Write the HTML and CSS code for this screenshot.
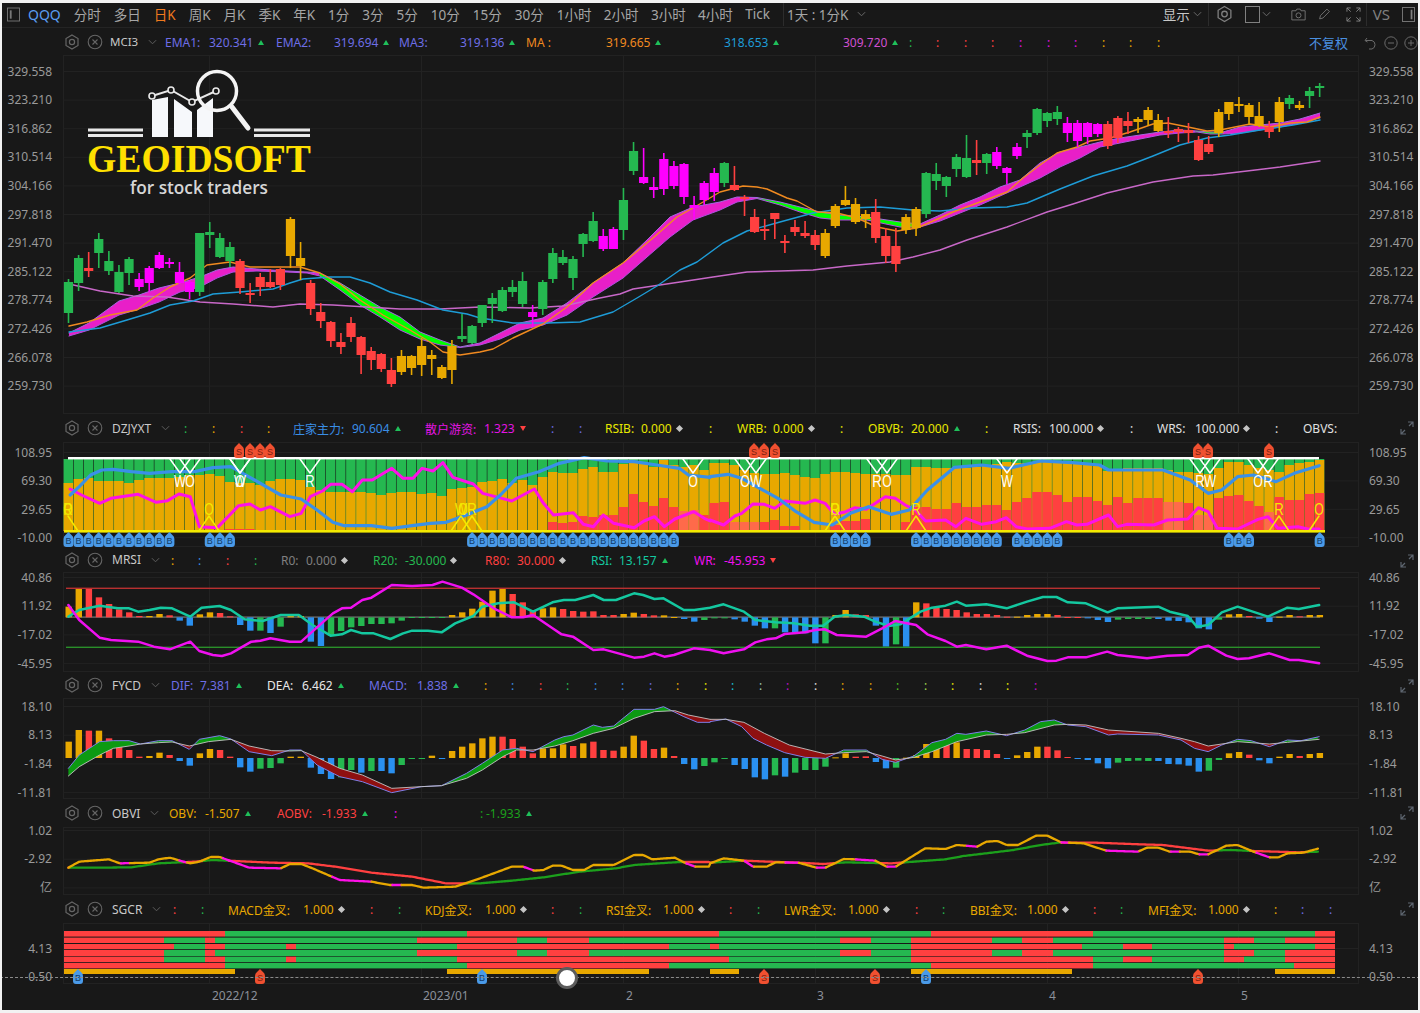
FILE: index.html
```html
<!DOCTYPE html>
<html lang="zh">

<head>
    <meta charset="UTF-8">
    <title>QQQ</title>
    <link rel="stylesheet" href="styles.css">
</head>

<body>
    <svg class="defs" width="0" height="0">
        <symbol id="i-gear" viewBox="0 0 16 16">
            <path d="M8 1 14 4.5V11.5L8 15 2 11.5V4.5Z" fill="none" stroke="currentColor" stroke-width="1.2" />
            <circle cx="8" cy="8" r="2.6" fill="none" stroke="currentColor" stroke-width="1.2" />
        </symbol>
        <symbol id="i-close" viewBox="0 0 16 16">
            <circle cx="8" cy="8" r="6.8" fill="none" stroke="currentColor" stroke-width="1.1" />
            <path d="M5.5 5.5 10.5 10.5M10.5 5.5 5.5 10.5" stroke="currentColor" stroke-width="1.1" />
        </symbol>
        <symbol id="i-chev" viewBox="0 0 10 6">
            <path d="M1 1 5 5 9 1" fill="none" stroke="currentColor" stroke-width="1.1" />
        </symbol>
        <symbol id="i-expand" viewBox="0 0 14 14">
            <path d="M8 1H13V6M13 1 9 5M6 13H1V8M1 13 5 9" fill="none" stroke="currentColor" stroke-width="1.2" />
        </symbol>
    </svg>

    <div class="app">
        <div class="topbar">
            <svg class="tb-box" viewBox="0 0 14 15"><rect x="0.5" y="0.5" width="13" height="14" fill="none" stroke="currentColor" /><rect x="3" y="3" width="2" height="9" fill="currentColor" /></svg>
            <span class="tb-symbol">QQQ</span>
            <span>分时</span>
            <span>多日</span>
            <span class="tb-active">日K</span>
            <span>周K</span>
            <span>月K</span>
            <span>季K</span>
            <span>年K</span>
            <span>1分</span>
            <span>3分</span>
            <span>5分</span>
            <span>10分</span>
            <span>15分</span>
            <span>30分</span>
            <span class="tb-hour">1小时</span>
            <span class="tb-hour">2小时</span>
            <span class="tb-hour">3小时</span>
            <span class="tb-hour">4小时</span>
            <span>Tick</span>
            <i class="tb-sep"></i>
            <span class="tb-range">1天 : 1分K</span>
            <svg class="chev"><use href="#i-chev" /></svg>
            <div class="tb-right">
                <span class="tb-show">显示</span>
                <svg class="chev"><use href="#i-chev" /></svg>
                <i class="tb-sep"></i>
                <svg class="tb-gear"><use href="#i-gear" /></svg>
                <svg class="tb-square" viewBox="0 0 15 17"><rect x="0.5" y="0.5" width="14" height="16" fill="none" stroke="currentColor" /></svg>
                <svg class="chev"><use href="#i-chev" /></svg>
                <svg class="tb-camera" viewBox="0 0 18 16"><path d="M1 3.5H6L7 1.5H11L12 3.5H17V14.5H1Z" fill="none" stroke="currentColor" /><circle cx="9" cy="9" r="3" fill="none" stroke="currentColor" /></svg>
                <svg class="tb-pencil" viewBox="0 0 16 16"><path d="M2 14 3 10 11 2 14 5 6 13Z" fill="none" stroke="currentColor" /></svg>
                <svg class="tb-full" viewBox="0 0 16 16"><path d="M1 5V1H5M11 1H15V5M15 11V15H11M5 15H1V11M1 1 5 5M15 1 11 5M15 15 11 11M1 15 5 11" fill="none" stroke="currentColor" /></svg>
                <i class="tb-sep"></i>
                <span class="tb-vs">VS</span>
                <svg class="tb-panel" viewBox="0 0 15 17"><rect x="0.5" y="0.5" width="14" height="16" fill="none" stroke="currentColor" /><rect x="10" y="3" width="2" height="11" fill="currentColor" /></svg>
            </div>
        </div>

        <section class="pane pane-main" id="main">
            <div class="pane-head">
                <svg class="gear"><use href="#i-gear" /></svg>
                <svg class="close"><use href="#i-close" /></svg>
                <span class="name name-mci">MCI3</span>
                <svg class="chev"><use href="#i-chev" /></svg>
                <div class="legend"></div>
                <div class="head-tools">
                    <span class="no-adjust">不复权</span>
                    <svg class="tool" viewBox="0 0 14 14"><path d="M3 2 1 4.5 3.5 6M1.5 4.5H8A4.5 4.5 0 0 1 8 13H5" fill="none" stroke="currentColor" /></svg>
                    <svg class="tool" viewBox="0 0 14 14"><circle cx="7" cy="7" r="6.2" fill="none" stroke="currentColor" /><path d="M4 7H10" stroke="currentColor" /></svg>
                    <svg class="tool" viewBox="0 0 14 14"><circle cx="7" cy="7" r="6.2" fill="none" stroke="currentColor" /><path d="M4 7H10M7 4V10" stroke="currentColor" /></svg>
                </div>
            </div>
            <div class="pane-body">
                <div class="axis axis-left"></div>
                <svg class="plot"></svg>
                <div class="axis axis-right"></div>
            </div>
            <svg class="logo" viewBox="0 0 224 128">
                <path d="M64 30 80 27V67H64ZM86 29 104 42V67H86ZM109 40 125 28V67H109Z" fill="#f6f8fb" />
                <path d="M64 26 83 20 104 32 128 21" fill="none" stroke="#e8e8e8" stroke-width="2" />
                <circle cx="64" cy="26" r="3" fill="#181818" stroke="#e8e8e8" stroke-width="1.6" />
                <circle cx="83" cy="20" r="3" fill="#181818" stroke="#e8e8e8" stroke-width="1.6" />
                <circle cx="104" cy="32" r="3" fill="#181818" stroke="#e8e8e8" stroke-width="1.6" />
                <circle cx="128" cy="21" r="3" fill="#181818" stroke="#e8e8e8" stroke-width="1.6" />
                <circle cx="129" cy="21" r="19.5" fill="none" stroke="#f4f4f4" stroke-width="3.5" />
                <path d="M144 37 160 58" stroke="#f4f4f4" stroke-width="5" stroke-linecap="round" />
                <path d="M0 60H55M0 65.5H55M166 60H222M166 65.5H222" stroke="#e8e8e8" stroke-width="3" />
                <text class="logo-title" x="-1" y="102" textLength="224" lengthAdjust="spacingAndGlyphs">GEOIDSOFT</text>
                <text class="logo-sub" x="42" y="124" textLength="138" lengthAdjust="spacingAndGlyphs">for stock traders</text>
            </svg>
        </section>

        <section class="pane pane-dz" id="dz">
            <div class="pane-head">
                <svg class="gear"><use href="#i-gear" /></svg>
                <svg class="close"><use href="#i-close" /></svg>
                <span class="name">DZJYXT</span>
                <svg class="chev"><use href="#i-chev" /></svg>
                <div class="legend"></div>
                <svg class="expand"><use href="#i-expand" /></svg>
            </div>
            <div class="pane-body">
                <div class="axis axis-left"></div>
                <svg class="plot"></svg>
                <div class="axis axis-right"></div>
            </div>
        </section>

        <section class="pane pane-mrsi" id="mrsi">
            <div class="pane-head">
                <svg class="gear"><use href="#i-gear" /></svg>
                <svg class="close"><use href="#i-close" /></svg>
                <span class="name">MRSI</span>
                <svg class="chev"><use href="#i-chev" /></svg>
                <div class="legend"></div>
                <svg class="expand"><use href="#i-expand" /></svg>
            </div>
            <div class="pane-body">
                <div class="axis axis-left"></div>
                <svg class="plot"></svg>
                <div class="axis axis-right"></div>
            </div>
        </section>

        <section class="pane pane-fycd" id="fycd">
            <div class="pane-head">
                <svg class="gear"><use href="#i-gear" /></svg>
                <svg class="close"><use href="#i-close" /></svg>
                <span class="name">FYCD</span>
                <svg class="chev"><use href="#i-chev" /></svg>
                <div class="legend"></div>
                <svg class="expand"><use href="#i-expand" /></svg>
            </div>
            <div class="pane-body">
                <div class="axis axis-left"></div>
                <svg class="plot"></svg>
                <div class="axis axis-right"></div>
            </div>
        </section>

        <section class="pane pane-obvi" id="obvi">
            <div class="pane-head">
                <svg class="gear"><use href="#i-gear" /></svg>
                <svg class="close"><use href="#i-close" /></svg>
                <span class="name">OBVI</span>
                <svg class="chev"><use href="#i-chev" /></svg>
                <div class="legend"></div>
                <svg class="expand"><use href="#i-expand" /></svg>
            </div>
            <div class="pane-body">
                <div class="axis axis-left"></div>
                <svg class="plot"></svg>
                <div class="axis axis-right"></div>
            </div>
        </section>

        <section class="pane pane-sgcr" id="sgcr">
            <div class="pane-head">
                <svg class="gear"><use href="#i-gear" /></svg>
                <svg class="close"><use href="#i-close" /></svg>
                <span class="name">SGCR</span>
                <svg class="chev"><use href="#i-chev" /></svg>
                <div class="legend"></div>
                <svg class="expand"><use href="#i-expand" /></svg>
            </div>
            <div class="pane-body">
                <div class="axis axis-left"></div>
                <svg class="plot"></svg>
                <div class="axis axis-right"></div>
            </div>
        </section>

        <div class="time-axis">
            <span>2022/12</span>
            <span>2023/01</span>
            <span>2</span>
            <span>3</span>
            <span>4</span>
            <span>5</span>
        </div>

        <div class="crosshair"></div>
        <div class="knob"></div>
    </div>

    <script src="app.js"></script>
</body>

</html>
```

FILE: styles.css
```css
* {
    box-sizing: border-box;
}

body {
    margin: 0;
    height: 1013px;
    overflow: hidden;
    background: #f2f2f2;
    font-family: "Noto Sans", "Noto Sans CJK SC", sans-serif;
    font-size: 12px;
    color: #9a9a9a;
}

.defs {
    position: absolute;
}

.app {
    position: relative;
    margin: 3px 2px 0;
    height: 1007px;
    background: #181818;
    display: flex;
    flex-direction: column;
    overflow: hidden;
}

/* top bar */
.topbar {
    height: 25px;
    flex: none;
    display: flex;
    align-items: center;
    gap: 13px;
    padding: 0 0 2px 5px;
    border-bottom: 1px solid #242424;
    font-size: 13.5px;
    color: #a6a6a6;
    white-space: nowrap;
}

.tb-box {
    width: 13px;
    height: 15px;
    margin-right: -5px;
    color: #777;
}

.tb-symbol {
    font-size: 14px;
    color: #5a9df0;
}

.tb-active {
    color: #f07a1e;
}

.tb-hour {
    margin-right: -0.6px;
}

.tb-sep {
    width: 1px;
    height: 24px;
    flex: none;
    background: #2c2c2c;
}

.tb-range {
    margin-left: -10px;
    margin-right: -4px;
}

.chev {
    width: 9px;
    height: 6px;
    flex: none;
    color: #6a6a6a;
}

.tb-right {
    margin-left: auto;
    display: flex;
    align-items: center;
    padding-right: 3px;
}

.tb-show {
    color: #c8c8c8;
}

.tb-right > .chev {
    margin: 0 6px 0 3px;
}

.tb-gear {
    width: 17px;
    height: 18px;
    margin: 0 12px 0 7px;
    color: #808080;
}

.tb-square {
    width: 15px;
    height: 17px;
    color: #808080;
}

.tb-square + .chev {
    margin: 0 20px 0 2px;
}

.tb-camera {
    width: 15px;
    height: 15px;
    margin-right: 12px;
    color: #808080;
}

.tb-pencil {
    width: 13px;
    height: 14px;
    margin-right: 14px;
    color: #808080;
}

.tb-full {
    width: 17px;
    height: 15px;
    margin-right: 4px;
    color: #808080;
}

.tb-vs {
    margin: 0 12px 0 6px;
    font-size: 15px;
    color: #808080;
}

.tb-panel {
    width: 13px;
    height: 17px;
    color: #808080;
}

/* panes */
.pane {
    position: relative;
    flex: none;
}

.pane-head {
    display: flex;
    align-items: center;
    padding-left: 62px;
    white-space: nowrap;
}

.pane-body {
    display: grid;
    grid-template-columns: 61px 1295px 60px;
    grid-template-rows: minmax(0, 1fr);
}

.pane-main .pane-head { height: 27px; }
.pane-main .pane-body { height: 359px; }
.pane-dz .pane-head { height: 28px; }
.pane-dz .pane-body { height: 105px; }
.pane-mrsi .pane-head { height: 25px; }
.pane-mrsi .pane-body { height: 100px; }
.pane-fycd .pane-head { height: 26px; }
.pane-fycd .pane-body { height: 101px; }
.pane-obvi .pane-head { height: 28px; }
.pane-obvi .pane-body { height: 68px; }
.pane-sgcr .pane-head { height: 28px; }
.pane-sgcr .pane-body { height: 61px; }

.gear,
.close {
    width: 16px;
    height: 16px;
    flex: none;
    color: #666;
}

.close {
    margin-left: 7px;
}

.name {
    margin-left: 9px;
    color: #c9c9c9;
}

.name-mci {
    margin-left: 7px;
    font-size: 11.5px;
}

.pane-head .chev {
    margin-left: 10px;
    color: #5e5e5e;
}

.legend {
    display: flex;
    flex: none;
    align-items: center;
    padding-top: 1px;
}

.lg {
    display: flex;
    flex: none;
    align-items: center;
    overflow: hidden;
}

.lg-label {
    flex: none;
}

.mark {
    flex: none;
    margin-left: 5px;
}

.mark-up {
    width: 0;
    height: 0;
    border: 3px solid transparent;
    border-top: 0;
    border-bottom: 5px solid #1fc05a;
}

.mark-down {
    width: 0;
    height: 0;
    border: 3px solid transparent;
    border-bottom: 0;
    border-top: 5px solid #ff4040;
}

.mark-flat {
    width: 5px;
    height: 5px;
    background: #c4c4c4;
    transform: rotate(45deg);
}

.head-tools {
    position: absolute;
    top: 5px;
    right: 0;
    display: flex;
    align-items: center;
    gap: 6px;
}

.no-adjust {
    margin-right: 10px;
    font-size: 13px;
    color: #4a8fe0;
}

.tool {
    width: 14px;
    height: 14px;
    color: #6a6a6a;
}

.expand {
    position: absolute;
    top: 7px;
    right: 4px;
    width: 14px;
    height: 14px;
    color: #5e6670;
}

/* price scales */
.axis {
    display: flex;
    flex-direction: column;
    min-height: 0;
    font-size: 12px;
    color: #9a9a9a;
}

.axis-left {
    align-items: flex-end;
    padding-right: 11px;
}

.axis-right {
    padding-left: 11px;
}

.plot {
    display: block;
    width: 1295px;
    height: 100%;
    overflow: visible;
}

.plot text {
    font-family: "Liberation Sans", sans-serif;
}

.flag {
    font-size: 16px;
    text-anchor: middle;
}

.tag {
    font-size: 9px;
    text-anchor: middle;
}

/* logo lies over the chart */
.logo {
    position: absolute;
    left: 86px;
    top: 42px;
    width: 224px;
    height: 128px;
    overflow: visible;
}

.logo-title {
    font-family: "Liberation Serif", serif;
    font-weight: bold;
    font-size: 40px;
    fill: #ffe000;
}

.logo-sub {
    font-family: "Open Sans", sans-serif;
    font-weight: 600;
    font-size: 18px;
    fill: #d6d6d6;
}

.time-axis {
    flex: 1;
    display: grid;
    grid-template-columns: 211px 203px 191px 232px 192px auto;
    padding: 3px 0 0 210px;
    color: #8b909a;
}

.crosshair {
    position: absolute;
    top: 974px;
    left: -2px;
    right: -2px;
    border-top: 1.5px dashed #8a8a8a;
}

.knob {
    position: absolute;
    top: 964px;
    left: 554px;
    width: 22px;
    height: 22px;
    border-radius: 50%;
    background: #fff;
    border: 3.5px solid #5c5c5c;
}
```

FILE: app.js
```js
const COL = { g: '#25b850', r: '#ff4040', o: '#e8a800', m: '#ff00ff', b: '#2a90f0', L: '#ff6a4a' };
const VIOLET = '#6e6ee6', GRID = '#222222';
const barX = i => 68.5 + i * 10.09;

// grid positions shared by every pane
const GRID_X = [63, 209, 421, 623, 815, 1047, 1238, 1358];

const panes = {
    main: { first: 71, step: 28.6, ticks: ['329.558', '323.210', '316.862', '310.514', '304.166', '297.818', '291.470', '285.122', '278.774', '272.426', '266.078', '259.730'] },
    dz: { first: 452, step: 28.4, ticks: ['108.95', '69.30', '29.65', '-10.00'] },
    mrsi: { first: 577, step: 28.7, ticks: ['40.86', '11.92', '-17.02', '-45.95'] },
    fycd: { first: 706, step: 28.7, ticks: ['18.10', '8.13', '-1.84', '-11.81'] },
    obvi: { first: 830, step: 28.7, ticks: ['1.02', '-2.92', '亿'] },
    sgcr: { first: 948, step: 28.7, ticks: ['4.13', '0.50'] }
};

// legend rows: [x, label, valueX, value, mark, colour], or [x, ':', colour] for the empty slots
const legends = {
    main: [
        [165, 'EMA1:', 209, '320.341', 'up', VIOLET], [276, 'EMA2:', 334, '319.694', 'up', VIOLET],
        [399, 'MA3:', 460, '319.136', 'up', VIOLET], [526, 'MA :', 606, '319.665', 'up', '#f08a20'],
        [724, '', 724, '318.653', 'up', '#1e9cd7'], [843, '', 843, '309.720', 'up', '#d050d0'],
        [909, ':', '#25b850'], [936, ':', '#ff4040'], [964, ':', '#ff4040'], [991, ':', '#ff4040'], [1019, ':', '#e010e0'],
        [1047, ':', '#e010e0'], [1074, ':', '#e010e0'], [1102, ':', '#e8a800'], [1129, ':', '#e8a800'], [1157, ':', '#e8a800']
    ],
    dz: [
        [184, ':', '#25b850'], [212, ':', '#e8a800'], [240, ':', '#ff4040'], [267, ':', '#e8a800'],
        [293, '庄家主力:', 352, '90.604', 'up', '#3a8ee6'], [425, '散户游资:', 484, '1.323', 'down', '#e414e4'],
        [551, ':', '#6e6ee6'], [579, ':', '#6e6ee6'],
        [605, 'RSIB:', 641, '0.000', 'flat', '#e8e800'], [709, ':', '#e8e800'],
        [737, 'WRB:', 773, '0.000', 'flat', '#e8e800'], [840, ':', '#e8e800'],
        [868, 'OBVB:', 911, '20.000', 'up', '#e8e800'], [985, ':', '#e8e800'],
        [1013, 'RSIS:', 1049, '100.000', 'flat', '#e0e0e0'], [1130, ':', '#e0e0e0'],
        [1157, 'WRS:', 1195, '100.000', 'flat', '#e0e0e0'], [1275, ':', '#e0e0e0'],
        [1303, 'OBVS:', 1345, '', '', '#e0e0e0']
    ],
    mrsi: [
        [171, ':', '#e8a800'], [198, ':', '#3a8ee6'], [226, ':', '#ff4040'], [254, ':', '#25b850'],
        [281, 'R0:', 306, '0.000', 'flat', '#808080'], [373, 'R20:', 405, '-30.000', 'flat', '#25b850'],
        [485, 'R80:', 517, '30.000', 'flat', '#ff4040'], [591, 'RSI:', 619, '13.157', 'up', '#14c8a0'],
        [694, 'WR:', 724, '-45.953', 'down', '#f010f0']
    ],
    fycd: [
        [171, 'DIF:', 200, '7.381', 'up', VIOLET], [267, 'DEA:', 302, '6.462', 'up', '#e8e8e8'],
        [369, 'MACD:', 417, '1.838', 'up', VIOLET],
        [484, ':', '#e8a800'], [511, ':', '#3a8ee6'], [539, ':', '#ff4040'], [566, ':', '#25b850'], [594, ':', '#3a8ee6'],
        [621, ':', '#3a8ee6'], [649, ':', '#6e6ee6'], [676, ':', '#e8a800'], [704, ':', '#e8e800'], [731, ':', '#18c0d8'],
        [759, ':', '#a0c8b0'], [786, ':', '#c010d0'], [814, ':', '#e0e0e0'], [841, ':', '#e8a800'], [869, ':', '#e8a800'],
        [896, ':', '#50c020'], [924, ':', '#a0d850'], [951, ':', '#e8e800'], [979, ':', '#e0e0e0'], [1006, ':', '#e8e800'],
        [1034, ':', '#c010d0']
    ],
    obvi: [
        [169, 'OBV:', 205, '-1.507', 'up', '#e8a800'], [277, 'AOBV:', 322, '-1.933', 'up', '#ff4040'],
        [394, ':', '#f010f0'], [480, ': ', 486, '-1.933', 'up', '#1ca01c']
    ],
    sgcr: [
        [173, ':', '#ff4040'], [201, ':', '#25b850'], [228, 'MACD金叉:', 303, '1.000', 'flat', '#e8a800'],
        [370, ':', '#ff4040'], [398, ':', '#25b850'], [425, 'KDJ金叉:', 485, '1.000', 'flat', '#e8a800'],
        [551, ':', '#ff4040'], [579, ':', '#25b850'], [606, 'RSI金叉:', 663, '1.000', 'flat', '#e8a800'],
        [729, ':', '#ff4040'], [757, ':', '#25b850'], [784, 'LWR金叉:', 848, '1.000', 'flat', '#e8a800'],
        [915, ':', '#ff4040'], [942, ':', '#25b850'], [970, 'BBI金叉:', 1027, '1.000', 'flat', '#e8a800'],
        [1093, ':', '#ff4040'], [1120, ':', '#25b850'], [1148, 'MFI金叉:', 1208, '1.000', 'flat', '#e8a800'],
        [1274, ':', '#e8a800'], [1301, ':', '#6e6ee6'], [1329, ':', '#6e6ee6']
    ]
};

// top bot hi lo colour, one row per trading day, in page pixels
const candles = `282 313 279 323 g|258 283 255 291 g|268 271 252 277 r|239 253 233 268 g|261 271 251 275 g|272 292 265 293 g|259 273 257 285 g|279 287 273 291 m|268 283 266 292 m|255 268 252 269 m
262 264 258 268 m|272 283 262 284 m|282 292 280 299 m|233 292 233 296 g|232 235 222 248 g|238 257 233 258 g|247 261 242 267 g|261 288 259 294 r|293 295 283 303 r|277 287 273 296 r
282 287 269 288 r|269 285 268 290 r|219 256 217 268 o|258 266 242 280 o|283 309 280 315 r|312 321 303 328 r|322 341 321 347 r|342 347 333 354 r|323 337 317 342 r|337 355 336 374 r
351 360 347 370 r|354 369 353 372 r|370 384 358 387 r|356 372 350 375 o|356 368 355 375 o|346 365 338 376 o|355 359 350 375 o|367 378 365 379 o|346 370 340 384 o|336 339 314 342 g
326 343 325 344 g|305 323 305 327 g|298 304 293 323 g|290 311 287 312 g|287 292 280 297 g|281 304 272 307 g|312 317 305 327 m|282 309 280 315 g|253 279 248 283 g|257 263 250 265 g
259 278 256 290 g|234 244 233 257 g|221 241 212 242 g|236 249 229 251 m|229 249 227 249 m|200 230 188 240 g|151 171 142 175 g|177 183 148 184 m|187 190 177 198 m|159 189 153 195 m
166 186 161 189 m|164 197 163 204 m|205 208 196 220 m|183 200 181 205 m|173 192 168 201 m|163 183 162 187 g|185 190 166 191 r|197 199 195 216 r|217 232 209 233 r|229 231 219 240 r
213 219 213 239 r|241 243 235 253 r|227 232 220 236 r|233 236 221 238 r|235 245 230 250 r|233 256 229 258 o|206 226 204 228 o|200 205 186 206 o|204 222 198 224 o|214 219 210 228 o
212 238 199 243 r|236 256 228 263 r|246 264 228 272 r|217 230 214 234 o|209 228 207 236 o|173 214 172 218 g|174 181 163 190 g|177 186 176 197 g|157 169 154 177 g|158 177 135 178 g
160 163 140 175 r|154 163 153 174 g|152 166 147 169 m|168 173 167 184 m|147 156 143 159 m|133 137 130 148 g|109 133 108 135 g|113 121 112 127 g|112 119 106 125 g|123 133 117 142 m
123 141 120 147 m|123 137 122 144 m|124 134 123 137 m|124 146 121 149 r|118 138 116 143 r|121 126 112 134 r|119 122 117 133 o|110 120 107 126 o|120 131 114 132 o|131 133 117 138 r
129 132 127 142 r|130 133 123 143 r|140 160 136 161 r|144 152 136 154 r|112 133 109 137 o|102 114 102 120 o|104 106 97 112 o|105 117 103 125 o|116 126 102 127 o|127 132 121 138 r
102 122 97 132 o|98 104 95 109 g|105 108 101 110 o|91 96 87 108 g|86 88 83 97 g`;

// [x, upper, lower] of the moving average ribbon
const ribbon = [[69, 333, 336], [89, 323, 330], [119, 301, 315], [139, 295, 309], [159, 288, 302], [180, 283, 292], [200, 277, 287], [217, 270, 278], [233, 267, 272], [257, 269, 271], [287, 271, 272], [307, 272, 273], [320, 273, 276], [340, 283, 290], [360, 295, 305], [380, 307, 317], [400, 317, 330], [420, 332, 339], [440, 340, 345], [460, 347, 347.5], [480, 343, 345], [500, 333, 339], [520, 323, 330], [543, 318, 325], [567, 303, 315], [593, 283, 297], [623, 263, 278], [647, 240, 257], [670, 217, 237], [693, 207, 220], [720, 202, 210], [737, 197, 202], [757, 197.5, 198.5], [780, 202, 205], [800, 207, 212], [820, 212, 218], [840, 215, 220], [867, 217, 220], [900, 222, 227], [920, 224, 227], [940, 215, 221], [960, 205, 213], [980, 197, 205], [1000, 187, 196], [1020, 180, 187], [1040, 163, 178], [1060, 152, 167], [1080, 147, 158], [1100, 142, 147], [1120, 138, 143], [1140, 135, 139], [1160, 132, 135], [1180, 130, 133], [1197, 131, 132], [1210, 132, 134], [1223, 132, 134], [1240, 127, 133], [1260, 125, 130], [1280, 123, 127], [1300, 119, 123], [1320, 113, 118]];
const ribbonGreen = [[320, 470], [757, 920], [1197, 1223]];

const maOrange = [[69, 326], [87, 322], [110, 315], [137, 310], [153, 298], [170, 287], [190, 278], [207, 265], [230, 262], [250, 267], [283, 267], [300, 267], [320, 273], [340, 284], [360, 300], [383, 315], [410, 330], [430, 342], [443, 352], [460, 355], [480, 352], [493, 349], [513, 338], [543, 324], [567, 307], [593, 283], [623, 263], [653, 238], [677, 217], [693, 208], [720, 192], [743, 186], [757, 187], [767, 189], [787, 198], [797, 201], [817, 212], [837, 213], [857, 218], [877, 227], [897, 231], [917, 228], [940, 218], [953, 212], [980, 202], [1007, 192], [1023, 178], [1040, 165], [1057, 153], [1077, 147], [1090, 141], [1110, 138], [1130, 132], [1153, 124], [1168, 123], [1188, 127], [1207, 131], [1220, 130], [1250, 124], [1270, 127], [1290, 123], [1307, 122], [1320, 117]];
const maBlue = [[69, 332], [100, 328], [127, 320], [150, 313], [170, 305], [193, 301], [213, 294], [240, 292], [273, 289], [290, 283], [303, 279], [330, 277], [350, 277], [370, 283], [390, 292], [417, 300], [443, 310], [467, 314], [480, 318], [513, 323], [547, 323], [580, 322], [613, 312], [637, 298], [657, 286], [680, 270], [697, 262], [723, 243], [747, 231], [780, 222], [813, 213], [847, 208], [880, 207], [913, 210], [940, 211], [973, 208], [1007, 207], [1027, 203], [1060, 189], [1093, 176], [1127, 166], [1153, 156], [1180, 145], [1207, 138], [1230, 135], [1260, 130], [1293, 125], [1320, 120]];
const maPink = [[69, 284], [100, 291], [133, 296], [167, 297], [200, 302], [233, 304], [273, 307], [300, 304], [333, 305], [367, 307], [400, 309], [440, 309], [480, 307], [530, 308], [563, 306], [600, 298], [620, 294], [633, 289], [680, 282], [713, 277], [747, 272], [780, 271], [813, 270], [847, 266], [890, 262], [913, 257], [940, 250], [967, 240], [1007, 227], [1047, 212], [1073, 204], [1107, 193], [1153, 182], [1193, 176], [1213, 175], [1247, 171], [1280, 167], [1320, 161]];

// values below were read from crops that are 2.208x wide and 3x high
const crop = (x0, y0, flat) => {
    const pts = [];
    for (let i = 0; i < flat.length; i += 2) pts.push([x0 + flat[i] / 2.208, y0 + flat[i + 1] / 3]);
    return pts;
};

const line = (pts, color, width) =>
    `<polyline points="${pts.map(p => p.join(',')).join(' ')}" fill="none" stroke="${color}" stroke-width="${width}" stroke-linejoin="round" stroke-linecap="round"/>`;

const rect = (x, y, w, h, color) => `<rect x="${x}" y="${y}" width="${w}" height="${h}" fill="${color}"/>`;

function at(pts, x) {
    if (x <= pts[0][0]) return pts[0][1];
    for (let i = 1; i < pts.length; i++) {
        if (x <= pts[i][0]) {
            const [x0, y0] = pts[i - 1], [x1, y1] = pts[i];
            return x1 === x0 ? y1 : y0 + (y1 - y0) * (x - x0) / (x1 - x0);
        }
    }
    return pts[pts.length - 1][1];
}

// fills between two lines, colour chosen per x
function band(a, b, colorAt) {
    let out = '', run = [], current = null;
    const flush = () => {
        if (run.length > 1) {
            const top = run.map(x => [x, at(a, x)]);
            const bot = run.slice().reverse().map(x => [x, at(b, x)]);
            out += `<polygon points="${top.concat(bot).map(p => p.join(',')).join(' ')}" fill="${current}"/>`;
        }
    };
    const end = a[a.length - 1][0];
    for (let x = a[0][0]; x <= end + 0.01; x += 1.5) {
        const c = colorAt(x);
        if (c !== current) {
            flush();
            run = run.length ? [run[run.length - 1]] : [];
            current = c;
        }
        run.push(x);
    }
    flush();
    return out;
}

// one polyline cut into runs of the same colour
function colored(pts, colorAt, width) {
    let out = '', run = [], current = null;
    const end = pts[pts.length - 1][0];
    for (let x = pts[0][0]; x <= end + 0.01; x += 1.5) {
        const c = colorAt(x), p = [x, at(pts, x)];
        if (c !== current) {
            if (run.length) {
                out += line(run.concat([p]), current, width);
                run = [];
            }
            current = c;
        }
        run.push(p);
    }
    if (run.length > 1) out += line(run, current, width);
    return out;
}

function histogram(spec, y0, baseZ) {
    const base = y0 + baseZ / 3;
    return spec.trim().split(/\s+/).map((item, i) => {
        const z = parseFloat(item), color = COL[item.slice(-1)];
        const y = y0 + z / 3;
        const h = Math.max(Math.abs(y - base), 1);
        return rect(barX(i) - 3, Math.min(y, base), 6.4, h, color);
    }).join('');
}

function drawGrid(el, pane) {
    let out = '';
    const box = el.getBoundingClientRect();
    GRID_X.forEach(x => { out += rect(x, box.top, 1, box.height, GRID); });
    pane.ticks.forEach((t, i) => { out += rect(box.left, pane.first + i * pane.step, box.width, 1, GRID); });
    out += rect(box.left, box.top, box.width, 1, GRID) + rect(box.left, box.bottom - 1, box.width, 1, GRID);
    return out;
}

function drawMain() {
    const upper = ribbon.map(r => [r[0], r[1]]), lower = ribbon.map(r => [r[0], r[2]]);
    let out = band(upper, lower, x => ribbonGreen.some(([a, b]) => x >= a && x < b) ? '#00ff00' : '#e81fc8');
    out += line(upper, '#a468e0', 1) + line(lower, '#b050e0', 1);
    out += line(maPink, '#c868c8', 1.4) + line(maBlue, '#1e9cd7', 1.4) + line(maOrange, '#f08a20', 1.4);
    candles.split(/[|\n]/).forEach((row, i) => {
        const [top, bot, hi, lo, c] = row.trim().split(' ');
        const x = barX(+i);
        out += rect(x - 0.8, +hi, 1.6, lo - hi, COL[c]);
        out += rect(x - 4.6, +top, 9.2, Math.max(bot - top, 2), COL[c]);
    });
    return out;
}

function marker(x, y, text, fill, ink) {
    return `<path d="M${x} ${y}l3 3q2 1.5 2 4v5q0 3 -3 3h-4q-3 0 -3 -3v-5q0 -2.5 2 -4z" fill="${fill}"/>` +
        `<text class="tag" x="${x}" y="${y + 12}" fill="${ink}">${text}</text>`;
}

// flag letters are narrow in the chart font
const flagText = (x, y, t, color) =>
    `<text class="flag" x="${x}" y="${y}" fill="${color}" textLength="${t === 'W' ? 12 : 9.5}" lengthAdjust="spacingAndGlyphs">${t}</text>`;

function drawDz() {
    const greenTop = [483, 479, 478, 481, 481, 481, 483, 480, 478, 478, 478, 477, 475, 475, 474, 476, 482, 483, 483, 485, 481, 479, 479, 480, 487, 490, 492, 492, 492, 492, 493, 495, 493, 492, 492, 494, 493, 496, 489, 488, 487, 482, 481, 479, 483, 480, 485, 477, 472, 473, 473, 469, 467, 472, 472, 464, 463, 464, 467, 460, 465, 467, 465, 470,
        463, 463, 465, 470, 473, 474, 474, 473, 475, 477, 478, 474, 472, 472, 473, 474, 474, 474, 475, 475, 467, 467, 468, 468, 468, 468, 467, 465, 464, 462, 463, 463, 462, 462, 462, 462, 463, 464, 465, 471, 470, 468, 468, 468, 468, 470, 472, 472, 473, 474, 468, 462, 462, 465, 468, 470, 472, 465, 463, 462, 460];
    const redTop = {
        0: 530, 16: 529, 17: 529, 18: 529, 48: 522, 49: 523, 50: 522, 51: 516, 52: 517, 53: 515, 54: 515, 55: 507, 56: 494, 57: 502, 58: 506, 59: 498, 60: 507, 61: '511L', 62: '510L', 63: 515,
        64: 503, 65: 502, 66: '522L', 67: '522L', 68: '522L', 69: 522, 70: 520, 71: 526, 72: 526, 76: 525, 77: 521, 78: 521, 79: 519, 83: 522, 84: 507, 85: 507, 86: 509, 87: 509, 88: 503, 89: 507, 90: 507, 91: 505, 92: 505, 93: 510, 94: 502, 95: 498, 96: 492, 97: 492, 98: 495, 99: 502, 100: 497, 101: 497, 102: 501, 103: 505, 104: 497, 105: 503, 106: 498, 107: 498, 108: 498, 109: '502L', 110: '502L', 111: 503, 112: '515L', 113: '515L', 114: 498, 115: 496, 116: 495, 117: 501, 118: 506, 119: '512L', 120: 497, 121: 500, 122: 500, 123: 494, 124: 493
    };
    let out = '';
    greenTop.forEach((g, i) => {
        const x = barX(i) - 4.9;
        out += rect(x, 459, 9.5, 72, COL.g) + rect(x, g, 9.5, 531 - g, COL.o);
        if (redTop[i]) {
            const y = parseInt(redTop[i]);
            out += rect(x, y, 9.5, 531 - y, String(redTop[i]).endsWith('L') ? COL.L : COL.r);
        }
    });

    const blue = crop(0, 415, [155, 240, 175, 215, 200, 180, 225, 165, 250, 163, 290, 170, 330, 175, 380, 170, 430, 170, 470, 158, 510, 155, 540, 178, 575, 205, 620, 240, 665, 252, 700, 285, 735, 322, 760, 332, 820, 332, 865, 340, 910, 332, 950, 325, 985, 322, 1030, 300, 1075, 275, 1105, 240, 1140, 190, 1190, 170, 1235, 145, 1290, 128, 1340, 138, 1400, 140, 1450, 150, 1500, 160, 1520, 180, 1568, 187])
        .concat(crop(710, 415, [0, 185, 40, 178, 70, 190, 110, 220, 150, 250, 190, 290, 230, 322, 270, 330, 310, 295, 350, 275, 400, 298, 440, 285, 480, 225, 540, 157, 600, 150, 660, 160, 730, 138, 800, 143, 860, 150, 880, 165, 1000, 165, 1060, 195, 1100, 235, 1130, 225, 1165, 185, 1200, 180, 1250, 200, 1290, 175, 1345, 152]));
    const pink = crop(0, 415, [155, 222, 180, 240, 220, 265, 245, 250, 305, 238, 345, 262, 370, 257, 395, 237, 420, 245, 440, 335, 480, 338, 527, 272, 552, 267, 575, 285, 597, 275, 640, 305, 665, 295, 685, 245, 712, 228, 730, 208, 755, 208, 778, 230, 800, 195, 822, 195, 865, 160, 890, 190, 912, 190, 932, 160, 956, 168, 978, 143, 1000, 187, 1045, 207, 1066, 235, 1130, 258, 1180, 222, 1200, 265, 1222, 300, 1266, 293, 1288, 328, 1310, 335, 1332, 300, 1355, 325, 1400, 338, 1422, 318, 1445, 305, 1467, 335, 1490, 312, 1532, 290, 1555, 310, 1568, 318])
        .concat(crop(710, 415, [0, 315, 30, 330, 55, 303, 70, 295, 95, 267, 120, 268, 143, 280, 165, 258, 210, 265, 232, 255, 254, 265, 275, 298, 300, 290, 320, 278, 345, 283, 387, 245, 409, 250, 431, 270, 453, 285, 476, 318, 520, 315, 543, 335, 565, 310, 600, 328, 632, 320, 654, 308, 676, 335, 700, 342, 750, 340, 787, 320, 810, 330, 832, 328, 880, 300, 900, 335, 920, 328, 980, 330, 1010, 315, 1055, 312, 1078, 278, 1100, 290, 1120, 340, 1165, 342, 1210, 313, 1232, 305, 1254, 340, 1298, 335, 1320, 342, 1345, 342]));
    out += line(pink, '#ff10e8', 3) + line(blue, '#3a90e8', 3.2);

    out += rect(68, 457, 1251, 2.4, '#ffffff') + rect(64, 530, 1261, 2.6, '#f4ea00');

    // sell flags hang from the top line, buy flags stand on the bottom one
    [[180, 'W'], [190, 'O'], [240, 'W'], [240, 'O'], [310, 'R'], [693, 'O'], [745, 'O'], [756, 'W'], [877, 'R'], [887, 'O'], [1007, 'W'], [1200, 'R'], [1210, 'W'], [1258, 'O'], [1268, 'R']].forEach(([x, t]) => {
        out += line([[x - 10, 459], [x, 473], [x + 10, 459]], '#ffffff', 1.5);
        out += flagText(x, 487, t, '#ffffff');
    });
    [[68, 'R', 1], [68, 'O', 0], [209, 'O', 2], [461, 'W', 2], [463, 'O', 0], [472, 'R', 2], [835, 'R', 2], [835, 'O', 0], [916, 'R', 2], [1279, 'R', 2], [1319, 'O', -1]].forEach(([x, t, kind]) => {
        if (kind === 2) out += line([[x - 10, 531], [x, 516], [x + 10, 531]], '#f4ea00', 1.5);
        if (kind === 1) out += line([[x, 516], [x + 10, 531]], '#f4ea00', 1.5);
        if (kind === -1) out += line([[x, 516], [x - 10, 531]], '#f4ea00', 1.5);
        out += flagText(x, 515, t, '#f4ea00');
    });

    [239, 250, 260, 270, 754, 764, 775, 1198, 1208, 1269].forEach(x => { out += marker(x, 443, 'S', '#f05030', '#7a2010'); });
    const buys = [];
    const addRange = (a, b) => { for (let i = a; i <= b; i++) buys.push(i); };
    addRange(0, 10); addRange(14, 16); addRange(40, 60); addRange(76, 79); addRange(84, 92); addRange(94, 98); addRange(115, 117); addRange(124, 124);
    buys.forEach(i => { out += marker(barX(i), 532, 'B', '#4a9ae8', '#123a66'); });
    return out;
}

function drawMrsi() {
    let out = rect(66, 616.4, 1254, 1.4, '#6a6a6a');
    out += histogram(`575o 522o 522r 547r 567r 583r 592r 603r 603o 597o 601r 617b 632b 598o 592o 594r 604r 630b 647b 647g 654b 635g 600o 603o 680b 693b 662g 648g 637g 633g 627g 627g 625g 617g 606g 606g 606g 606g
        600o 592o 581o 560o 527o 522o 537r 562r 585r 580o 577o 582r 588r 590r 589r 600r 600r 597o 593o 597r 601r 601o 606o 612b 620b 615g
        609g 610g 613b 620b 632b 640b 640g 652b 653b 655b 685b 685g 600o 585o 598r 600r 632b 695b 688g 695b 562o 565r 578r 582r 585r 592r 597r 597r 600r 605r 605o 600o 597o 597o 600r 606r 606r 609b 615b 621b 614g 612g 612g 612g 612b 617b 618b 622b 640b 643b 614g 598o 597o 603r 611b 621b 605o 600o 604r 600o 600o`, 415, 607);
    out += rect(66, 587.6, 1254, 1.4, '#b83030') + rect(66, 646.6, 1254, 1.4, '#2a8f2a');
    const rsi = crop(0, 415, [151, 605, 175, 585, 220, 572, 260, 580, 285, 580, 305, 590, 330, 585, 355, 578, 380, 580, 420, 605, 445, 578, 485, 573, 510, 585, 540, 613, 580, 618, 620, 600, 660, 600, 690, 630, 730, 662, 755, 658, 775, 645, 800, 655, 825, 655, 862, 672, 890, 655, 910, 647, 945, 647, 975, 652, 1005, 625, 1045, 603, 1065, 575, 1100, 565, 1135, 562, 1177, 590, 1220, 562, 1245, 555, 1270, 555, 1310, 540, 1333, 555, 1360, 555, 1400, 535, 1420, 540, 1445, 552, 1465, 550, 1510, 585, 1533, 585, 1568, 578])
        .concat(crop(710, 415, [0, 578, 30, 568, 75, 590, 100, 615, 145, 622, 185, 625, 220, 632, 250, 632, 275, 605, 300, 600, 340, 605, 365, 620, 395, 633, 420, 628, 465, 590, 490, 578, 520, 572, 545, 560, 565, 572, 610, 568, 655, 580, 700, 560, 735, 546, 765, 546, 790, 562, 830, 565, 878, 592, 900, 580, 990, 575, 1015, 590, 1055, 603, 1075, 635, 1100, 630, 1130, 592, 1165, 575, 1232, 605, 1275, 578, 1300, 582, 1345, 570]));
    const wr = crop(0, 415, [151, 570, 175, 615, 220, 668, 245, 675, 305, 680, 340, 695, 375, 703, 420, 680, 440, 708, 470, 720, 490, 723, 510, 715, 555, 680, 575, 677, 597, 670, 640, 680, 665, 680, 710, 625, 735, 595, 755, 580, 775, 578, 800, 555, 820, 548, 865, 510, 910, 513, 955, 510, 977, 500, 1020, 518, 1045, 538, 1090, 580, 1130, 607, 1155, 607, 1177, 600, 1220, 640, 1240, 658, 1265, 665, 1310, 705, 1333, 703, 1400, 728, 1422, 725, 1445, 715, 1467, 725, 1488, 720, 1532, 700, 1568, 705])
        .concat(crop(710, 415, [0, 705, 30, 715, 75, 703, 100, 682, 125, 673, 145, 670, 165, 657, 210, 652, 232, 645, 254, 643, 280, 660, 345, 665, 380, 640, 409, 618, 455, 630, 480, 658, 520, 678, 545, 695, 565, 690, 610, 703, 655, 692, 700, 722, 745, 738, 765, 737, 790, 727, 830, 727, 877, 710, 900, 720, 965, 730, 1010, 722, 1055, 720, 1080, 698, 1100, 692, 1140, 722, 1165, 732, 1190, 730, 1235, 715, 1280, 735, 1300, 735, 1345, 745]));
    out += line(rsi, '#14c8a0', 2.5) + line(wr, '#f010f0', 2.5);
    return out;
}

function drawFycd() {
    let out = histogram(`215o 180o 182r 182o 205r 225r 240r 260r 258o 248o 255r 273b 287b 250o 237o 240r 260r 292b 305b 296g 294g 280g 260o 260o 293b 312b 327b 322g 300g 308b 303g 303b 310b 285g 267g 266g 257o 265b 243o 230o 220o 205o 200o 200r 207r 230r 250r 235o 235o 223o 228r 220o 215r 240r 242r 230o 197o 212r 237r 233o 258r 282b 298b 288g
        277g 265g 285b 297b 322b 328b 316g 320b 308g 300g 300g 290g 262o 250o 260r 259r 276b 295b 293g 263o 255o 222o 233o 225r 217o 237r 237r 240r 252r 266b 256o 246o 230o 230r 241r 261r 265b 270b 280b 295b 278g 273g 272g 273g 273b 282b 283b 287b 305b 302g 270g 250o 246o 254r 271b 280b 260o 252o 258r 252o 249o`, 670, 264);
    const dif = crop(0, 670, [151, 295, 175, 255, 220, 215, 250, 212, 285, 212, 310, 222, 350, 212, 380, 212, 418, 238, 440, 208, 485, 197, 510, 207, 550, 245, 600, 257, 640, 240, 665, 240, 700, 285, 750, 320, 800, 335, 865, 368, 930, 350, 975, 347, 1030, 310, 1065, 280, 1110, 240, 1140, 235, 1177, 245, 1225, 210, 1245, 200, 1265, 195, 1310, 165, 1330, 172, 1355, 168, 1400, 118, 1445, 118, 1465, 110, 1510, 140, 1540, 157, 1568, 157])
        .concat(crop(710, 670, [0, 155, 35, 147, 70, 170, 95, 205, 125, 225, 165, 248, 210, 262, 255, 265, 295, 240, 345, 240, 380, 268, 410, 277, 450, 258, 490, 218, 520, 208, 545, 190, 565, 193, 610, 183, 655, 197, 695, 180, 730, 155, 760, 150, 790, 165, 830, 170, 880, 195, 900, 192, 990, 195, 1040, 210, 1070, 235, 1100, 245, 1130, 225, 1165, 208, 1195, 212, 1235, 230, 1275, 210, 1305, 212, 1345, 200]));
    const dea = crop(0, 670, [151, 318, 175, 290, 220, 255, 250, 235, 285, 228, 310, 222, 350, 218, 380, 216, 418, 228, 460, 215, 510, 208, 550, 228, 600, 242, 640, 243, 665, 242, 700, 262, 750, 295, 800, 315, 865, 355, 930, 350, 975, 347, 1030, 325, 1065, 300, 1110, 260, 1140, 240, 1177, 240, 1225, 228, 1265, 212, 1310, 190, 1355, 175, 1400, 145, 1445, 125, 1490, 122, 1520, 135, 1568, 148])
        .concat(crop(710, 670, [0, 148, 35, 148, 75, 157, 120, 190, 175, 225, 255, 252, 295, 248, 345, 245, 380, 258, 410, 270, 450, 262, 490, 245, 545, 215, 610, 195, 655, 193, 695, 188, 760, 165, 790, 163, 830, 165, 880, 180, 990, 190, 1040, 205, 1070, 215, 1100, 228, 1165, 215, 1235, 222, 1275, 217, 1345, 208]));
    out += band(dif, dea, x => at(dif, x) < at(dea, x) ? '#0c9a12' : '#8e1010');
    out += line(dif, '#7f7fe8', 1) + line(dea, '#c4c4c4', 0.9);
    return out;
}

function drawObvi() {
    const obv = crop(0, 670, [151, 593, 175, 575, 240, 568, 265, 580, 330, 578, 350, 568, 375, 563, 400, 573, 420, 580, 440, 575, 465, 561, 485, 561, 550, 593, 620, 595, 640, 582, 665, 582, 690, 595, 750, 630, 820, 635, 860, 645, 910, 645, 935, 653, 1005, 650, 1060, 625, 1130, 590, 1155, 590, 1180, 602, 1200, 600, 1220, 587, 1240, 587, 1265, 600, 1290, 600, 1310, 585, 1355, 585, 1400, 555, 1420, 555, 1440, 568, 1490, 563, 1515, 580, 1535, 590, 1568, 590])
        .concat(crop(710, 670, [0, 580, 30, 565, 75, 572, 95, 590, 125, 590, 145, 577, 195, 578, 235, 593, 255, 593, 295, 567, 320, 568, 365, 572, 390, 590, 410, 590, 475, 535, 520, 537, 545, 525, 590, 530, 610, 515, 635, 513, 655, 525, 680, 525, 720, 497, 745, 497, 775, 517, 825, 520, 875, 542, 945, 545, 965, 533, 990, 533, 1015, 545, 1060, 545, 1080, 553, 1100, 553, 1140, 527, 1165, 525, 1200, 545, 1235, 562, 1255, 562, 1275, 550, 1310, 548, 1345, 535]));
    const aobv = crop(0, 670, [151, 593, 220, 593, 290, 592, 350, 580, 430, 575, 470, 570, 550, 575, 600, 578, 680, 580, 740, 590, 820, 608, 910, 620, 985, 640, 1060, 640, 1130, 632, 1200, 622, 1280, 605, 1360, 595, 1400, 585, 1500, 576, 1568, 576])
        .concat(crop(710, 670, [0, 578, 75, 572, 130, 575, 195, 578, 250, 582, 300, 577, 400, 580, 420, 578, 480, 572, 520, 568, 560, 558, 640, 545, 670, 540, 730, 525, 770, 518, 850, 518, 950, 523, 1000, 525, 1100, 542, 1150, 540, 1200, 543, 1300, 547, 1345, 545]));
    const falling = [[120, 129], [179, 186], [222, 281], [331, 371], [392, 401], [523, 532], [686, 695], [744, 753], [785, 798], [816, 825], [855, 875], [887, 896], [966, 977], [1061, 1068], [1106, 1138], [1170, 1179], [1199, 1208], [1256, 1269]];
    let out = colored(aobv, x => at(obv, x) < at(aobv, x) - 0.5 ? '#1ca01c' : '#ff4040', 2.3);
    out += colored(obv, x => falling.some(([a, b]) => x >= a && x < b) ? '#ff10e8' : '#e8a800', 2.3);
    return out;
}

function drawSgcr() {
    const rows = [
        [931, 5.6, [225, 467, 719, 931, 1093, 1315, 1335]],
        [937.6, 5.4, [164, 205, 215, 417, 517, 547, 589, 840, 871, 911, 992, 1022, 1053, 1224, 1254, 1285, 1335]],
        [944, 5.2, [174, 205, 225, 286, 296, 457, 669, 710, 719, 911, 1082, 1123, 1152, 1224, 1234, 1315, 1335]],
        [950, 6, [164, 205, 215, 417, 517, 547, 589, 840, 871, 911, 992, 1022, 1053, 1224, 1254, 1285, 1335]],
        [956.6, 5.6, [164, 205, 225, 286, 296, 457, 729, 911, 1093, 1123, 1152, 1224, 1244, 1285, 1335]],
        [963, 5.4, [225, 467, 669, 931, 1093, 1294, 1335]]
    ];
    let out = '';
    rows.forEach(([y, h, stops]) => {
        let from = 64;
        stops.forEach((to, i) => {
            out += rect(from, y, to - from, h, i % 2 ? COL.g : COL.r);
            from = to;
        });
    });
    [[64, 235], [447, 649], [710, 739], [911, 1072], [1275, 1335]].forEach(([a, b]) => { out += rect(a, 969, b - a, 5, COL.o); });
    [[78, 'B'], [260, 'S'], [482, 'B'], [764, 'S'], [875, 'S'], [926, 'B'], [1198, 'S']].forEach(([x, t]) => {
        out += t === 'B' ? marker(x, 969, t, '#4a9ae8', '#123a66') : marker(x, 969, t, '#f05030', '#7a2010');
    });
    return out;
}

function fillLegend(id) {
    const el = document.querySelector(`#${id} .legend`);
    const rows = legends[id];
    el.style.marginLeft = rows[0][0] - el.getBoundingClientRect().left + 'px';
    rows.forEach((row, i) => {
        const next = rows[i + 1];
        const item = document.createElement('div');
        item.className = 'lg';
        if (next) item.style.width = next[0] - row[0] + 'px';
        if (row[1] === ':' && row.length === 3) {
            item.style.color = row[2];
            item.textContent = ':';
        } else {
            const [x, label, vx, value, mark, color] = row;
            item.style.color = color;
            const l = document.createElement('span');
            l.className = 'lg-label';
            l.style.width = vx - x + 'px';
            l.textContent = label;
            item.append(l);
            if (value) item.append(value);
            if (mark) {
                const m = document.createElement('i');
                m.className = `mark mark-${mark}`;
                item.append(m);
            }
        }
        el.append(item);
    });
}

function fillAxis(id) {
    const pane = panes[id];
    const body = document.querySelector(`#${id} .pane-body`);
    const top = body.getBoundingClientRect().top;
    body.querySelectorAll('.axis').forEach(axis => {
        // one pixel lower than the grid line, as the labels sit in the reference
        axis.style.marginTop = pane.first + 1 - top - pane.step / 2 + 'px';
        pane.ticks.forEach(t => {
            const s = document.createElement('span');
            s.textContent = t;
            s.style.height = s.style.lineHeight = pane.step + 'px';
            axis.append(s);
        });
    });
}

const draw = { main: drawMain, dz: drawDz, mrsi: drawMrsi, fycd: drawFycd, obvi: drawObvi, sgcr: drawSgcr };

Object.keys(panes).forEach(id => {
    fillLegend(id);
    fillAxis(id);
    const plot = document.querySelector(`#${id} .plot`);
    const box = plot.getBoundingClientRect();
    // plot units are page pixels
    plot.setAttribute('viewBox', `${box.left} ${box.top} ${box.width} ${box.height}`);
    plot.innerHTML = drawGrid(plot, panes[id]) + draw[id]();
});
```
